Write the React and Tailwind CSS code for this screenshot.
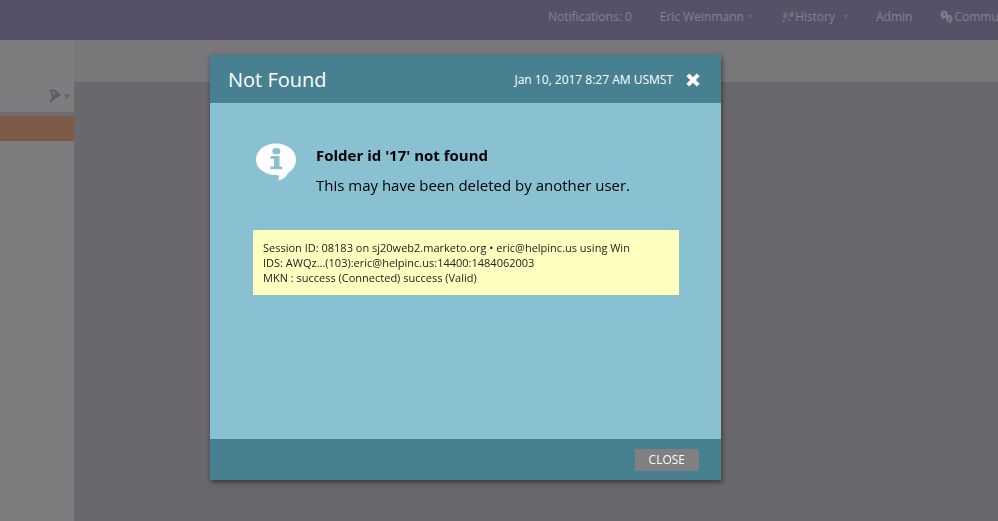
import React from 'react';

function Caret({ className }) {
  return (
    <svg viewBox="0 0 6 5" className={className} fill="#57724f" aria-hidden="true">
      <path d="M0 0h6L3 5z" />
    </svg>
  );
}

function Footprints() {
  return (
    <svg viewBox="0 0 14 12" className="h-3 w-3.5 shrink-0" fill="#6b7075" aria-hidden="true">
      <ellipse cx="4.2" cy="4.4" rx="2" ry="3.3" transform="rotate(16 4.2 4.4)" />
      <ellipse cx="2.4" cy="9.8" rx="1.5" ry="1.3" />
      <ellipse cx="10.7" cy="3.4" rx="2" ry="3.3" transform="rotate(24 10.7 3.4)" />
      <ellipse cx="8.1" cy="8.8" rx="1.5" ry="1.3" />
    </svg>
  );
}

function CommunityIcon() {
  return (
    <svg viewBox="0 0 14 14" className="h-3.5 w-3.5 shrink-0" fill="#7d7c83" aria-hidden="true">
      <path d="M4 0.8a3.7 3.7 0 0 0-1.6 7L2 10l2.4-1.8A3.7 3.7 0 0 0 4 .8z" />
      <path d="M9.4 5a3.6 3.6 0 0 0-.5 7.1l2.3 1.6-.2-2.1A3.6 3.6 0 0 0 9.4 5z" />
      <path d="M3.2 3.4q1-1 1.6 0t-.7 1.6v1M9.4 7v4" stroke="#575168" fill="none" />
    </svg>
  );
}

function FilterIcon() {
  return (
    <svg viewBox="0 0 14 15" className="h-[15px] w-3.5" aria-hidden="true">
      <path d="M1 1.5C3 0 6 .5 8.500 2L13 6.200 7.500 9.200 2.500 14 1.200 12.800 3.600 9C4.200 6.500 3 4 1 1.500z" fill="#5c5d67" />
      <path d="M3 2.200C4.500 1.500 6.500 2.200 8 3.500L6 7.500C5.700 5.500 4.600 3.500 3 2.200z" fill="#73737c" />
    </svg>
  );
}

function InfoBubble() {
  return (
    <svg viewBox="0 0 40 38" className="h-[38px] w-10 shrink-0" aria-hidden="true">
      <path
        d="M20 0.500C8.800.500 0 7.500 0 16.400 0 25.400 8.500 31.600 19.500 32c1.800.1 3.200.2 3.500 1 .3 1.300-.2 2.700-1 4.500 5-1 8.300-3.300 10-7.500 5-2.800 8-7.800 8-13.600C40 7.500 31.200.500 20 .500z"
        fill="#fff"
      />
      <ellipse cx="20.300" cy="8.200" rx="4" ry="3.200" fill="#89c1d2" />
      <path d="M14.500 13h9v10.500h2.700v2.700H14.300v-2.700H18v-7.800h-3.500z" fill="#89c1d2" />
    </svg>
  );
}

function TopBar() {
  return (
    <header className="h-10 overflow-hidden bg-[#575168] pl-[548px] text-xs text-[#858389]">
      <nav className="flex h-[34px] items-center gap-7 whitespace-nowrap">
        <a href="#notifications">Notifications: 0</a>
        <a href="#account" className="flex items-center gap-1">
          Eric Weinmann
          <Caret className="h-1 w-[5px]" />
        </a>
        <a href="#history" className="flex items-center">
          <Footprints />
          History
          <Caret className="ml-2 h-1 w-[5px]" />
        </a>
        <a href="#admin">Admin</a>
        <a href="#community" className="flex items-center">
          <CommunityIcon />
          Community
        </a>
      </nav>
    </header>
  );
}

function Sidebar() {
  return (
    <aside className="flex w-[74px] shrink-0 flex-col bg-[#7f7c7f]">
      <div className="flex h-[72px] items-end justify-end pr-1 pb-2">
        <button className="flex items-center gap-0.5" aria-label="Filter">
          <FilterIcon />
          <Caret className="h-[5px] w-1.5" />
        </button>
      </div>
      <div className="h-1 bg-[#6e6b6f]" />
      <div className="h-[25px] bg-[#7b5b47]" />
    </aside>
  );
}

function NotFoundDialog() {
  return (
    <div
      role="dialog"
      aria-labelledby="dialog-title"
      className="flex w-full max-w-[511px] flex-col bg-[#89c1d2] shadow-[1px_2px_5px_rgba(0,0,0,0.5)]"
    >
      <div className="flex h-12 items-center bg-[#478091] pt-0.5 pr-5 pl-[18px] text-white">
        <h1 id="dialog-title" className="flex-1 text-xl">Not Found</h1>
        <span className="text-xs">Jan 10, 2017 8:27 AM USMST</span>
        <button className="ml-3" aria-label="Close dialog">
          <svg viewBox="0 0 14 14" className="h-4 w-4" aria-hidden="true">
            <path d="M2.500 2.500l9 9M11.500 2.500l-9 9" stroke="#fff" strokeWidth="3.600" />
          </svg>
        </button>
      </div>
      <div className="px-[42px] pt-[37px] pb-36">
        <div className="flex gap-5 pl-1 text-black">
          <div className="pt-[3px]">
            <InfoBubble />
          </div>
          <div className="text-[15px] leading-[30px]">
            <h2 className="font-bold">Folder id '17' not found</h2>
            <p>This may have been deleted by another user.</p>
          </div>
        </div>
        <div className="mt-[30px] ml-px bg-[#ffffc0] px-2.5 py-2.5 text-[11px] leading-[15px] text-[#222]">
          <p>Session ID: 08183 on sj20web2.marketo.org • eric@helpinc.us using Win</p>
          <p>IDS: AWQz...(103):eric@helpinc.us:14400:1484062003</p>
          <p>MKN : success (Connected) success (Valid)</p>
        </div>
      </div>
      <div className="flex h-[41px] items-center justify-end bg-[#478091] pr-[22px]">
        <button className="bg-[#808080] px-3.5 py-px text-xs leading-5 text-white">CLOSE</button>
      </div>
    </div>
  );
}

export default function App() {
  return (
    <div className="flex min-h-screen flex-col bg-[#6a686c] font-['Open_Sans',sans-serif]">
      <TopBar />
      <div className="flex flex-1">
        <Sidebar />
        <main className="flex-1">
          <div className="h-[42px] bg-[#7a777b]" />
        </main>
      </div>
      <div className="fixed inset-0 flex items-start justify-center pt-[55px] pr-[67px]">
        <NotFoundDialog />
      </div>
    </div>
  );
}
